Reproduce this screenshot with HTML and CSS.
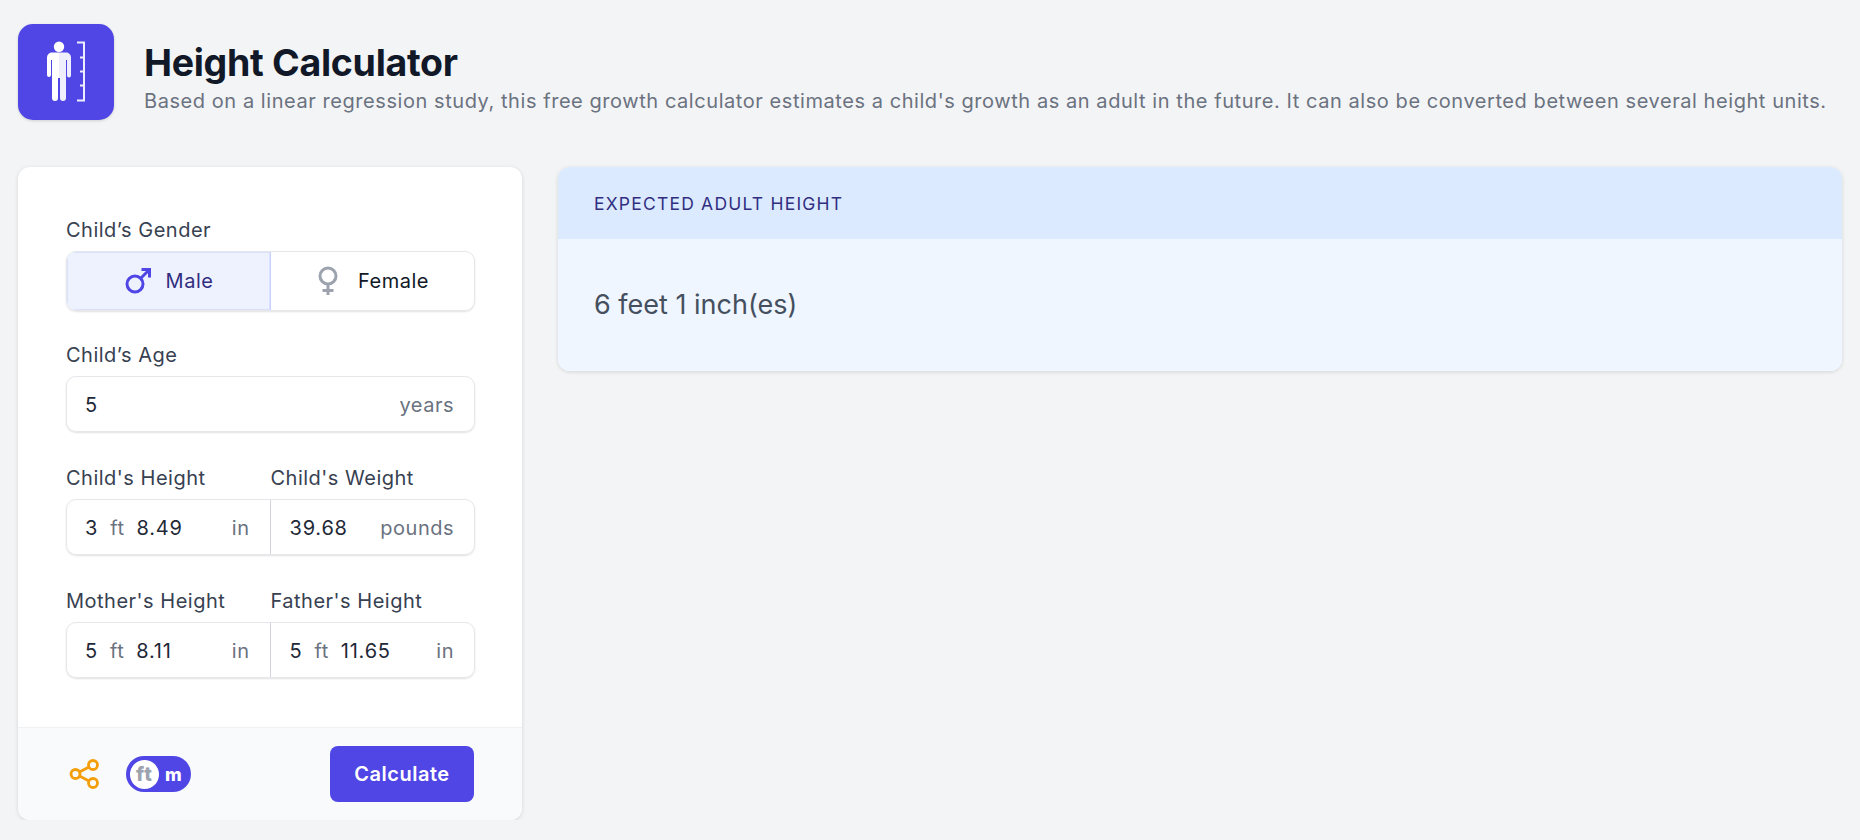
FILE: index.html
```html
<!DOCTYPE html>
<html lang="en">
<head>
    <meta charset="UTF-8">
    <meta name="viewport" content="width=device-width, initial-scale=1.0">
    <title>Height Calculator</title>
    <link rel="stylesheet" href="styles.css">
</head>
<body>
    <header class="page-head">
        <div class="app-icon">
            <svg width="96" height="96" viewBox="0 0 96 96">
                <defs>
                    <linearGradient id="half">
                        <stop offset="0.5" stop-color="#fff"/>
                        <stop offset="0.5" stop-color="#eeeefc"/>
                    </linearGradient>
                </defs>
                <circle cx="41" cy="22.7" r="5.2" fill="#fff"/>
                <path d="M34 28.5h14a5 5 0 0 1 5 5v18a2 2 0 0 1-4 0V36h-1v38a3 3 0 0 1-6 0V54h-2v20a3 3 0 0 1-6 0V36h-1v15a2 2 0 0 1-4 0V33.500a5 5 0 0 1 5-5z" fill="url(#half)"/>
                <path d="M59 18.500h7v58h-7M62 33.500h4M62 47.500h4M62 61.500h4" fill="none" stroke="#eeedfd" stroke-width="2"/>
            </svg>
        </div>
        <div class="head-text">
            <h1>Height Calculator</h1>
            <p>Based on a linear regression study, this free growth calculator estimates a child's growth as an adult in the future. It can also be converted between several height units.</p>
        </div>
    </header>

    <main class="layout">
        <section class="card form-card">
            <div class="form-body">
                <div class="field">
                    <div class="label">Child’s Gender</div>
                    <div class="box seg">
                        <div class="seg-item seg-active">
                            <svg width="28" height="30" viewBox="0 0 28 30" fill="none" stroke="#4f46e5" stroke-width="3">
                                <circle cx="11" cy="18" r="8"/>
                                <path d="M17 12l8-8M17.500 3.500h8v8"/>
                            </svg>
                            <span>Male</span>
                        </div>
                        <div class="seg-item">
                            <svg class="female-icon" width="24" height="30" viewBox="0 0 24 30" fill="none" stroke="#9ca3af" stroke-width="3">
                                <circle cx="12" cy="10" r="8"/>
                                <path d="M12 18v11M6.500 24.500h11"/>
                            </svg>
                            <span>Female</span>
                        </div>
                    </div>
                </div>

                <div class="field">
                    <div class="label">Child’s Age</div>
                    <div class="box">
                        <div class="input-cell">
                            <span class="val">5</span>
                            <span class="unit unit-end">years</span>
                        </div>
                    </div>
                </div>

                <div class="field">
                    <div class="label-row">
                        <div class="label">Child's Height</div>
                        <div class="label">Child's Weight</div>
                    </div>
                    <div class="box">
                        <div class="input-cell">
                            <span class="val">3</span>
                            <span class="unit">ft</span>
                            <span class="val">8.49</span>
                            <span class="unit unit-end">in</span>
                        </div>
                        <div class="input-cell">
                            <span class="val">39.68</span>
                            <span class="unit unit-end">pounds</span>
                        </div>
                    </div>
                </div>

                <div class="field">
                    <div class="label-row">
                        <div class="label">Mother's Height</div>
                        <div class="label">Father's Height</div>
                    </div>
                    <div class="box">
                        <div class="input-cell">
                            <span class="val">5</span>
                            <span class="unit">ft</span>
                            <span class="val">8.11</span>
                            <span class="unit unit-end">in</span>
                        </div>
                        <div class="input-cell">
                            <span class="val">5</span>
                            <span class="unit">ft</span>
                            <span class="val">11.65</span>
                            <span class="unit unit-end">in</span>
                        </div>
                    </div>
                </div>
            </div>

            <div class="form-foot">
                <svg class="share" width="32" height="32" viewBox="0 0 32 32" fill="none" stroke="#f59e0b" stroke-width="2.800">
                    <circle cx="6.500" cy="16" r="4.500"/>
                    <circle cx="24" cy="7" r="4.500"/>
                    <circle cx="24" cy="25" r="4.500"/>
                    <path d="M10.500 14l9.500-5M10.500 18l9.500 5"/>
                </svg>
                <div class="unit-switch">
                    <span class="knob">ft</span>
                    <span class="other">m</span>
                </div>
                <button class="calc-btn">Calculate</button>
            </div>
        </section>

        <section class="card result-card">
            <div class="result-head">EXPECTED ADULT HEIGHT</div>
            <div class="result-body">6 feet 1 inch(es)</div>
        </section>
    </main>
</body>
</html>
```

FILE: styles.css
```css
html, body{
    margin: 0;
    padding: 0;
}
body{
    background-color: #f3f4f6;
    font-family: "Inter", "Liberation Sans", sans-serif;
    font-size: 20px;
    letter-spacing: .5px;
    color: #374151;
    padding: 24px 18px 0;
}

/* top part */
.page-head{
    display: flex;
    align-items: center;
    gap: 30px;
    height: 96px;
}
.app-icon{
    width: 96px;
    height: 96px;
    flex: none;
    background-color: #4f46e5;
    border-radius: 15px;
    box-shadow: 0 1px 3px rgba(0,0,0,.15);
}
.app-icon svg{
    display: block;
}
.head-text{
    padding-top: 11px;
}
h1{
    margin: 0;
    font-size: 37.500px;
    line-height: 45px;
    font-weight: 700;
    letter-spacing: -.3px;
    color: #111827;
}
.head-text p{
    margin: 2px 0 0;
    font-size: 20px;
    line-height: 28px;
    letter-spacing: .56px;
    color: #6b7280;
}

.layout{
    display: grid;
    grid-template-columns: 504px 1284px;
    gap: 36px;
    align-items: start;
    margin-top: 47px;
}
.card{
    background-color: #fff;
    border-radius: 12px;
    box-shadow: 0 1px 4px rgba(0,0,0,.13);
    overflow: hidden;
}

/* form */
.form-body{
    padding: 49px 47px 49px 48px;
    display: flex;
    flex-direction: column;
    gap: 32px;
}
.label{
    font-size: 20px;
    line-height: 28px;
    color: #374151;
}
.label-row{
    display: grid;
    grid-template-columns: 1fr 1fr;
}
.box{
    margin-top: 7px;
    display: flex;
    height: 56px;
    box-sizing: border-box;
    border: 1px solid #e5e7eb;
    border-radius: 10px;
    box-shadow: 0 1px 2px rgba(0,0,0,.12);
    overflow: hidden;
}
.seg{
    height: 60px;
    margin-top: 7px;
    margin-bottom: -2px;
}
.seg-item{
    flex: 1;
    display: flex;
    justify-content: center;
    align-items: center;
    gap: 14px;
    color: #111827;
}
.female-icon{
    margin-right: 4px;
}
.seg-active{
    background-color: #eef2ff;
    color: #312e81;
    border-right: 1px solid #c7d2fe;
    box-shadow: inset 0 0 0 1px #d9e1fd;
}
.input-cell{
    flex: 1;
    display: flex;
    align-items: center;
    gap: 12px;
    padding: 2px 20px 0 18px;
    min-width: 0;
}
.input-cell + .input-cell{
    border-left: 1px solid #d1d5db;
    padding-left: 19px;
}
.val{
    color: #1f2937;
    letter-spacing: .8px;
}
.unit{
    color: #6b7280;
}
.unit-end{
    margin-left: auto;
}

.form-foot{
    display: flex;
    align-items: center;
    height: 92px;
    padding: 0 48px;
    background-color: #f9fafb;
    border-top: 1px solid #f0f1f4;
}
.share{
    margin-left: 3px;
    flex: none;
}
.unit-switch{
    margin-left: 25px;
    width: 65px;
    height: 36px;
    border-radius: 18px;
    background-color: #4f46e5;
    display: flex;
    align-items: center;
    padding-left: 4px;
    box-sizing: border-box;
    font-weight: 800;
    font-size: 18px;
}
.knob{
    width: 29px;
    height: 29px;
    border-radius: 50%;
    background-color: #fff;
    color: #9ca3af;
    font-size: 20px;
    letter-spacing: 1px;
    display: flex;
    justify-content: center;
    align-items: center;
}
.other{
    color: #fff;
    margin-left: 6px;
}
.calc-btn{
    margin-left: auto;
    width: 144px;
    height: 56px;
    border: none;
    border-radius: 8px;
    background-color: #4f46e5;
    color: #fff;
    font-family: inherit;
    font-size: 20px;
    letter-spacing: .5px;
    font-weight: 600;
}

/* result */
.result-head{
    height: 72px;
    display: flex;
    align-items: center;
    padding: 0 36px;
    background-color: #dbeafe;
    color: #312e81;
    font-size: 17.500px;
    letter-spacing: 1.200px;
}
.result-body{
    background-color: #eff6ff;
    padding: 47px 36px;
    font-size: 27px;
    line-height: 38px;
    letter-spacing: 0;
    color: #454f5e;
}
```
